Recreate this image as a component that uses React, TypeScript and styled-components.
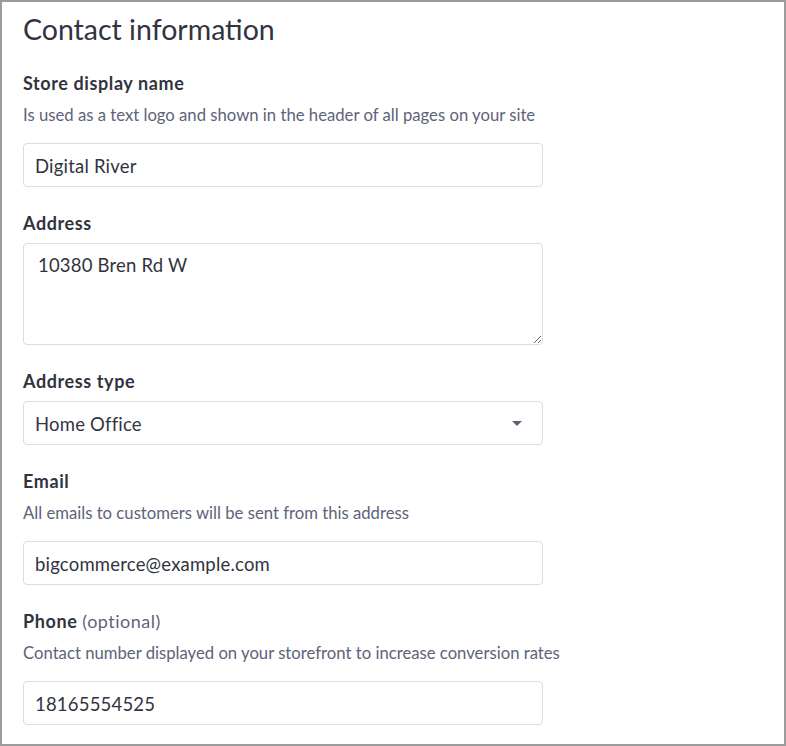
import React from "react";
import styled, { createGlobalStyle } from "styled-components";

const Global = createGlobalStyle`
  html, body { margin: 0; padding: 0; background: #fff; }
  body { font-family: "Lato", "Liberation Sans", sans-serif; }
  * { box-sizing: border-box; }
`;

const Frame = styled.div`
  width: 786px;
  height: 746px;
  border: 2px solid #9b9b9b;
  overflow: hidden;
  padding: 6px 0 0 21px;
  background: #fff;
`;

const Title = styled.h1`
  margin: 0 0 21px 0;
  font-size: 28.5px;
  line-height: 42px;
  font-weight: 400;
  color: #313440;
`;

const Field = styled.div`
  display: flex;
  flex-direction: column;
  align-items: flex-start;
  margin-bottom: 24px;
`;

const Label = styled.label`
  font-size: 18px;
  line-height: 24px;
  font-weight: 700;
  letter-spacing: 0.6px;
  color: #313440;
  margin-bottom: 8px;
`;

const Optional = styled.span`
  font-weight: 400;
  letter-spacing: 0.5px;
  color: #5e637a;
`;

const Description = styled.p`
  margin: 0 0 16px 0;
  font-size: 16.7px;
  line-height: 24px;
  white-space: nowrap;
  color: #5e637a;
`;

const Input = styled.input`
  width: 520px;
  height: 44px;
  border: 1px solid #d9dce9;
  border-radius: 4px;
  padding: 1px 11px 0 11px;
  font-family: inherit;
  font-size: 18.5px;
  letter-spacing: 0.2px;
  color: #313440;
  background: #fff;
  outline: none;
`;

const TextArea = styled.textarea`
  width: 520px;
  height: 102px;
  border: 1px solid #d9dce9;
  border-radius: 4px;
  padding: 9px 14px;
  font-family: inherit;
  font-size: 18.5px;
  letter-spacing: 0.2px;
  line-height: 24px;
  color: #313440;
  background: #fff;
  outline: none;
  resize: vertical;
`;

const SelectBox = styled.div`
  width: 520px;
  height: 44px;
  border: 1px solid #d9dce9;
  border-radius: 4px;
  padding: 1px 20px 0 11px;
  display: flex;
  align-items: center;
  justify-content: space-between;
  font-size: 18.5px;
  letter-spacing: 0.2px;
  color: #313440;
`;

const Caret = styled.svg`
  width: 10px;
  height: 5px;
  fill: #5e637a;
`;

export default function App() {
  return (
    <>
      <Global />
      <Frame>
        <Title>Contact information</Title>
        <Field>
          <Label>Store display name</Label>
          <Description>Is used as a text logo and shown in the header of all pages on your site</Description>
          <Input defaultValue="Digital River" />
        </Field>
        <Field>
          <Label>Address</Label>
          <TextArea defaultValue="10380 Bren Rd W" />
        </Field>
        <Field>
          <Label>Address type</Label>
          <SelectBox>
            <span>Home Office</span>
            <Caret viewBox="0 0 10 5"><path d="M0 0h10L5 5z" /></Caret>
          </SelectBox>
        </Field>
        <Field>
          <Label>Email</Label>
          <Description>All emails to customers will be sent from this address</Description>
          <Input defaultValue="bigcommerce@example.com" />
        </Field>
        <Field>
          <Label>
            Phone <Optional>(optional)</Optional>
          </Label>
          <Description>Contact number displayed on your storefront to increase conversion rates</Description>
          <Input defaultValue="18165554525" />
        </Field>
      </Frame>
    </>
  );
}
